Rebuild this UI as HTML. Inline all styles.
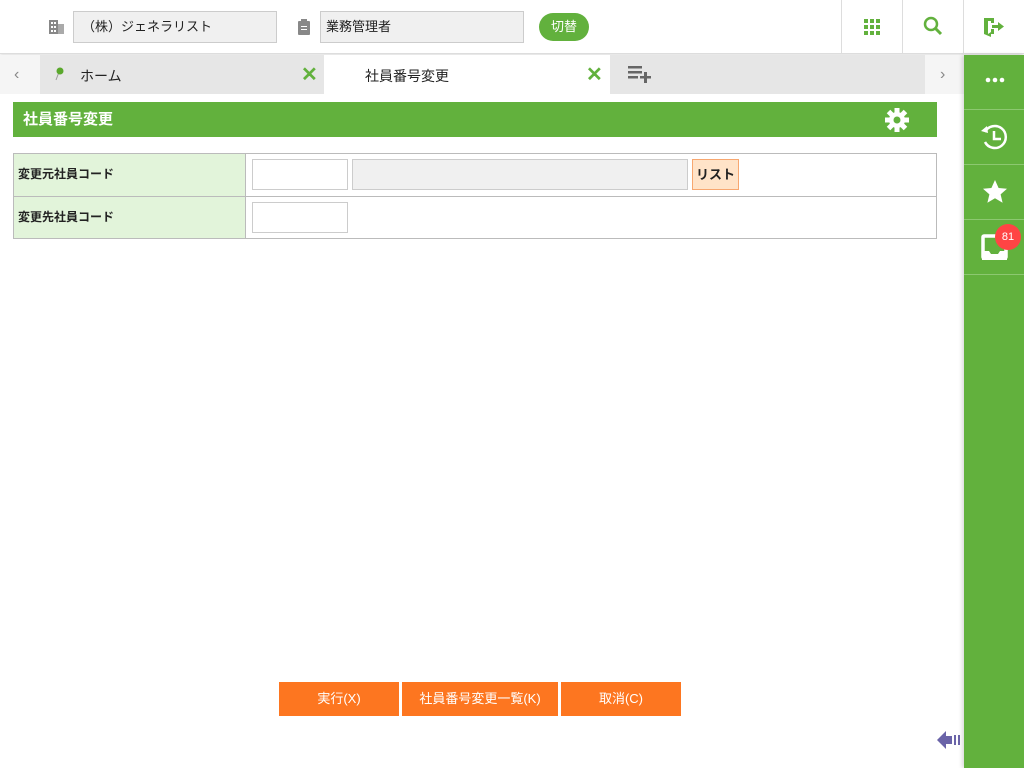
<!DOCTYPE html>
<html><head><meta charset="utf-8"><style>
*{margin:0;padding:0;box-sizing:border-box}
body{width:1024px;height:768px;overflow:hidden;background:#fff;font-family:"Liberation Sans","Noto Sans CJK JP",sans-serif;font-size:13px;color:#222;position:relative}
.abs{position:absolute}
.inp{position:absolute;background:#f0f0f0;border:1px solid #ccc;height:32px;font-size:13px;line-height:30px;padding-left:8px}
</style></head><body>
<div class="abs" style="left:0;top:0;width:1024px;height:54px;background:#fff;border-bottom:1px solid #ddd;box-shadow:0 1px 3px rgba(0,0,0,.15)"></div>
<svg class="abs" style="left:49px;top:19px" width="16" height="16"><rect x="0" y="1" width="9" height="14" fill="#888"/><rect x="9" y="5" width="6" height="10" fill="#aaa"/><g fill="#fff"><rect x="2" y="3" width="2" height="2"/><rect x="5" y="3" width="2" height="2"/><rect x="2" y="7" width="2" height="2"/><rect x="5" y="7" width="2" height="2"/><rect x="2" y="11" width="2" height="2"/><rect x="5" y="11" width="2" height="2"/></g></svg>
<div class="inp" style="left:73px;top:11px;width:204px">（株）ジェネラリスト</div>
<svg class="abs" style="left:297px;top:19px" width="14" height="16"><rect x="1" y="2" width="12" height="14" rx="1" fill="#888"/><rect x="4" y="0" width="6" height="4" fill="#888"/><g fill="#fff"><rect x="4" y="7" width="6" height="1"/><rect x="4" y="10" width="6" height="1"/></g></svg>
<div class="inp" style="left:320px;top:11px;width:204px;padding-left:5px">業務管理者</div>
<div class="abs" style="left:539px;top:13px;width:50px;height:28px;border-radius:14px;background:#62b13d;color:#fff;text-align:center;line-height:28px;font-size:13px">切替</div>
<div class="abs" style="left:841px;top:0;width:1px;height:54px;background:#ddd"></div>
<div class="abs" style="left:902px;top:0;width:1px;height:54px;background:#ddd"></div>
<div class="abs" style="left:963px;top:0;width:1px;height:54px;background:#ddd"></div>
<svg class="abs" style="left:864px;top:19px" width="16" height="16" fill="#62b13d"><rect x="0" y="0" width="4" height="4"/><rect x="6" y="0" width="4" height="4"/><rect x="12" y="0" width="4" height="4"/><rect x="0" y="6" width="4" height="4"/><rect x="6" y="6" width="4" height="4"/><rect x="12" y="6" width="4" height="4"/><rect x="0" y="12" width="4" height="4"/><rect x="6" y="12" width="4" height="4"/><rect x="12" y="12" width="4" height="4"/></svg>
<svg class="abs" style="left:923px;top:16px" width="20" height="20"><circle cx="8" cy="8" r="6" fill="none" stroke="#62b13d" stroke-width="2.5"/><line x1="12.5" y1="12.5" x2="18" y2="18" stroke="#62b13d" stroke-width="3"/></svg>
<svg class="abs" style="left:983px;top:16px" width="22" height="22" fill="#62b13d"><path d="M1 2h10v5h-3V5H5v13l3-2v-3h3v5H8v3l-7-3z"/><path d="M9 9h6V6l6 4.5-6 4.5v-3H9z"/></svg>
<div class="abs" style="left:0;top:55px;width:964px;height:39px;background:#f5f5f5"></div>
<div class="abs" style="left:14px;top:66px;color:#888;font-size:16px">‹</div>
<div class="abs" style="left:40px;top:55px;width:284px;height:39px;background:#e6e6e6"></div>
<svg class="abs" style="left:55px;top:67px" width="12" height="14"><line x1="4" y1="5" x2="1" y2="13" stroke="#999" stroke-width="1"/><circle cx="5" cy="4" r="3.5" fill="#5aa82c"/></svg>
<div class="abs" style="left:80px;top:66px;font-size:14px">ホーム</div>
<div class="abs" style="left:301px;top:62px;color:#62b13d;font-size:20px;font-weight:bold">✕</div>
<div class="abs" style="left:324px;top:55px;width:286px;height:39px;background:#fff"></div>
<div class="abs" style="left:365px;top:66px;font-size:14px">社員番号変更</div>
<div class="abs" style="left:586px;top:62px;color:#62b13d;font-size:20px;font-weight:bold">✕</div>
<div class="abs" style="left:610px;top:55px;width:315px;height:39px;background:#e6e6e6"></div>
<svg class="abs" style="left:628px;top:66px" width="24" height="18" fill="#666"><rect x="0" y="0" width="14" height="2.5"/><rect x="0" y="5" width="14" height="2.5"/><rect x="0" y="10" width="10" height="2.5"/><rect x="12" y="10" width="11" height="2.5"/><rect x="16" y="6" width="3" height="11"/></svg>
<div class="abs" style="left:940px;top:66px;color:#888;font-size:16px">›</div>
<div class="abs" style="left:964px;top:55px;width:60px;height:713px;background:#62b13d;box-shadow:-2px 0 4px rgba(0,0,0,.15)"></div>
<div class="abs" style="left:964px;top:109px;width:60px;height:1px;background:#8cc870"></div>
<div class="abs" style="left:964px;top:164px;width:60px;height:1px;background:#8cc870"></div>
<div class="abs" style="left:964px;top:219px;width:60px;height:1px;background:#8cc870"></div>
<div class="abs" style="left:964px;top:274px;width:60px;height:1px;background:#8cc870"></div>
<svg class="abs" style="left:985px;top:77px" width="20" height="6" fill="#fff"><circle cx="3" cy="3" r="2.3"/><circle cx="10" cy="3" r="2.3"/><circle cx="17" cy="3" r="2.3"/></svg>
<svg class="abs" style="left:980px;top:122px" width="30" height="30"><path d="M5 10A11 11 0 1 1 5 20" fill="none" stroke="#fff" stroke-width="2.5"/><path d="M1 9l6-5 1 7z" fill="#fff"/><path d="M14 9v8h7" fill="none" stroke="#fff" stroke-width="2.5"/></svg>
<svg class="abs" style="left:982px;top:179px" width="26" height="26"><path d="M13 1l3.6 8 8.4.8-6.4 5.6 2 8.3L13 19.3 5.4 23.7l2-8.3L1 9.8 9.4 9z" fill="#fff"/></svg>
<svg class="abs" style="left:981px;top:234px" width="28" height="28"><rect x="2" y="2" width="23" height="22" rx="1" fill="none" stroke="#fff" stroke-width="3.5"/><path d="M1 17h7l2 3h7l2-3h7v9H1z" fill="#fff"/></svg>
<div class="abs" style="left:995px;top:224px;width:26px;height:26px;border-radius:13px;background:#f44;color:#fff;font-size:11px;text-align:center;line-height:26px">81</div>
<div class="abs" style="left:13px;top:102px;width:924px;height:35px;background:#62b13d"></div>
<div class="abs" style="left:23px;top:108px;color:#fff;font-weight:bold;font-size:15px">社員番号変更</div>
<svg class="abs" style="left:885px;top:108px" width="24" height="24" viewBox="0 0 24 24"><g fill="#fff"><circle cx="12" cy="12" r="8"/><rect x="9.5" y="0" width="5" height="24"/><rect x="9.5" y="0" width="5" height="24" transform="rotate(45 12 12)"/><rect x="9.5" y="0" width="5" height="24" transform="rotate(90 12 12)"/><rect x="9.5" y="0" width="5" height="24" transform="rotate(135 12 12)"/></g><circle cx="12" cy="12" r="3.5" fill="#62b13d"/></svg>
<div class="abs" style="left:13px;top:153px;width:924px;height:86px;border:1px solid #bbb"></div>
<div class="abs" style="left:14px;top:154px;width:231px;height:84px;background:#e2f4da"></div>
<div class="abs" style="left:245px;top:154px;width:1px;height:84px;background:#bbb"></div>
<div class="abs" style="left:14px;top:196px;width:922px;height:1px;background:#bbb"></div>
<div class="abs" style="left:18px;top:165px;font-size:12px;font-weight:bold">変更元社員コード</div>
<div class="abs" style="left:18px;top:208px;font-size:12px;font-weight:bold">変更先社員コード</div>
<div class="abs" style="left:252px;top:159px;width:96px;height:31px;border:1px solid #ccc;background:#fff"></div>
<div class="abs" style="left:352px;top:159px;width:336px;height:31px;border:1px solid #ccc;background:#f0f0f0"></div>
<div class="abs" style="left:692px;top:159px;width:47px;height:31px;border:1px solid #f7a770;background:#ffe3c8;font-weight:bold;font-size:13px;text-align:center;line-height:29px">リスト</div>
<div class="abs" style="left:252px;top:202px;width:96px;height:31px;border:1px solid #ccc;background:#fff"></div>
<div class="abs" style="left:279px;top:682px;width:120px;height:34px;background:#fd7620;color:#fff;text-align:center;line-height:34px">実行(X)</div>
<div class="abs" style="left:402px;top:682px;width:156px;height:34px;background:#fd7620;color:#fff;text-align:center;line-height:34px">社員番号変更一覧(K)</div>
<div class="abs" style="left:561px;top:682px;width:120px;height:34px;background:#fd7620;color:#fff;text-align:center;line-height:34px">取消(C)</div>
<svg class="abs" style="left:937px;top:730px" width="26" height="20" fill="#6a64a8"><path d="M0 10l9-9v5h6v8H9v5z"/><rect x="17" y="5" width="2" height="10"/><rect x="21" y="5" width="2" height="10"/></svg>
</body></html>
